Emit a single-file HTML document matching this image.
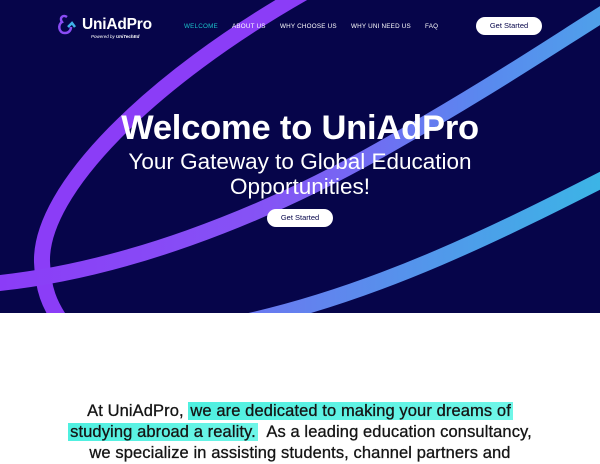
<!DOCTYPE html>
<html><head><meta charset="utf-8"><style>
*{margin:0;padding:0;box-sizing:border-box}
body{width:600px;height:451px;overflow:hidden;background:#fff;font-family:"Liberation Sans",Arial,sans-serif}
.hero{position:relative;height:313px;background:#06054a;overflow:hidden}
svg.bg{position:absolute;left:0;top:0}
.nav{position:absolute;left:0;top:0;width:600px;height:52px}
.logo{position:absolute;left:58px;top:14px;color:#fff}
.logo .n{position:absolute;left:24px;top:2px;font-size:15.5px;font-weight:bold;letter-spacing:-0.2px;white-space:nowrap}
.logo .s{position:absolute;left:33px;top:20px;font-size:4.5px;white-space:nowrap;font-style:italic}
.links a{position:absolute;top:23px;font-size:6.3px;color:#fff;text-decoration:none;white-space:nowrap;letter-spacing:0.2px}
.btn{position:absolute;background:#fff;color:#06054a;border-radius:10px;font-size:7.5px;text-align:center}
h1{position:absolute;left:0;width:600px;top:109px;text-align:center;color:#fff;font-size:34.5px;font-weight:bold;letter-spacing:-0.2px}
h2{position:absolute;left:0;width:600px;top:149px;text-align:center;color:#fff;font-size:22.5px;font-weight:normal;line-height:25px}
.txt{position:absolute;left:0;width:600px;top:401px;text-align:center;font-size:16.5px;line-height:21px;color:#151515;letter-spacing:0.1px;-webkit-text-stroke:0.3px #151515}
.hl{background:linear-gradient(90deg,#4ff0e0,#6ff6e8);padding:0 2px}
</style></head><body>
<div class="hero">
<svg class="bg" width="600" height="313" viewBox="0 0 600 313">
<defs>
<linearGradient id="g" x1="0" y1="0" x2="600" y2="0" gradientUnits="userSpaceOnUse">
<stop offset="0" stop-color="#8b3cf7"/><stop offset="0.45" stop-color="#8554f5"/><stop offset="0.8" stop-color="#5a88ef"/><stop offset="1" stop-color="#4fa0ea"/></linearGradient>
<linearGradient id="g3" x1="250" y1="0" x2="600" y2="0" gradientUnits="userSpaceOnUse">
<stop offset="0" stop-color="#6a78f0"/><stop offset="1" stop-color="#3cb4e6"/></linearGradient>
</defs>
<path d="M305 -8 C150 80 40 190 42 262 C43 290 50 305 60 320" stroke="#8b3df7" stroke-width="16" fill="none"/>
<path d="M-10 284 C120 272 260 218 380 150 S560 40 625 0" stroke="url(#g)" stroke-width="16" fill="none"/>
<path d="M245 322 C380 292 500 232 625 168" stroke="url(#g3)" stroke-width="16" fill="none"/>
</svg>
<div class="nav">
<div class="logo">
<svg width="20" height="22" viewBox="0 0 20 22" style="position:absolute;left:-1px;top:0px"><path d="M10 3 C6 0 2 4 5 8 C1 10 1 19 8 19 C12 19 14 16 14 13" stroke="#8a4cf5" stroke-width="2.5" fill="none"/><path d="M11 13 L15 9 L18 13" stroke="#3fb3e8" stroke-width="2.5" fill="none"/></svg>
<div class="n">UniAdPro</div><div class="s">Powered by <b>UniTechEd</b></div>
</div>
<div class="links">
<a style="left:184px;color:#1bc2c9">WELCOME</a>
<a style="left:232px">ABOUT US</a>
<a style="left:280px">WHY CHOOSE US</a>
<a style="left:351px">WHY UNI NEED US</a>
<a style="left:425px">FAQ</a>
</div>
<div class="btn" style="left:476px;top:17px;width:66px;height:18px;line-height:18px">Get Started</div>
</div>
<h1>Welcome to UniAdPro</h1>
<h2>Your Gateway to Global Education<br>Opportunities!</h2>
<div class="btn" style="left:267px;top:209px;width:66px;height:18px;line-height:18px">Get Started</div>
</div>
<div class="txt">At UniAdPro, <span class="hl">we are dedicated to making your dreams of</span><br><span class="hl">studying abroad a reality.</span>&nbsp; As a leading education consultancy,<br>we specialize in assisting students, channel partners and</div>
</body></html>
